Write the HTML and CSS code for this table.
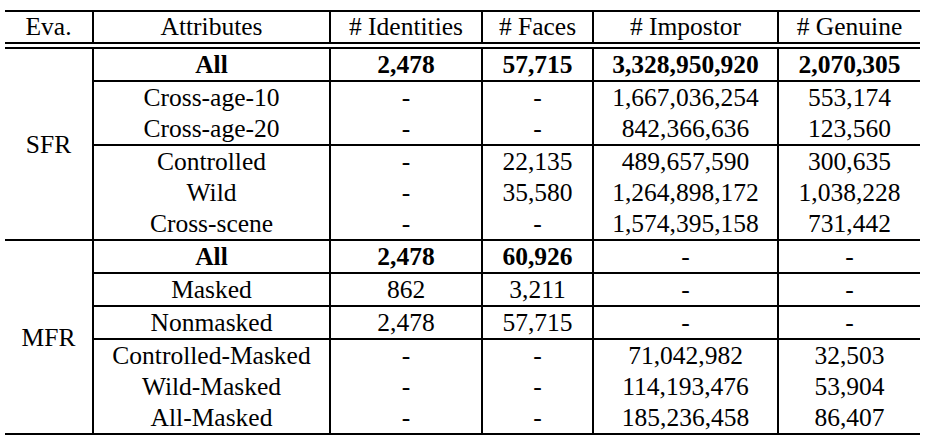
FILE: index.html
```html
<!DOCTYPE html>
<html>
<head>
<meta charset="utf-8">
<link rel="stylesheet" href="styles.css">
</head>
<body>
<table class="data">
  <colgroup>
    <col class="c-eva"><col class="c-attr"><col class="c-id"><col class="c-faces"><col class="c-imp"><col class="c-gen">
  </colgroup>
  <thead>
    <tr class="head">
      <th class="first">Eva.</th>
      <th>Attributes</th>
      <th># Identities</th>
      <th># Faces</th>
      <th># Impostor</th>
      <th># Genuine</th>
    </tr>
    <tr class="spacer"><td colspan="6"></td></tr>
  </thead>
  <tbody>
    <tr class="rule">
      <td class="first group" rowspan="6">SFR</td>
      <td class="b">All</td><td class="b">2,478</td><td class="b">57,715</td><td class="b">3,328,950,920</td><td class="b">2,070,305</td>
    </tr>
    <tr><td>Cross-age-10</td><td>-</td><td>-</td><td>1,667,036,254</td><td>553,174</td></tr>
    <tr class="rule"><td>Cross-age-20</td><td>-</td><td>-</td><td>842,366,636</td><td>123,560</td></tr>
    <tr><td>Controlled</td><td>-</td><td>22,135</td><td>489,657,590</td><td>300,635</td></tr>
    <tr><td>Wild</td><td>-</td><td>35,580</td><td>1,264,898,172</td><td>1,038,228</td></tr>
    <tr class="rule"><td>Cross-scene</td><td>-</td><td>-</td><td>1,574,395,158</td><td>731,442</td></tr>
    <tr class="rule">
      <td class="first group" rowspan="6">MFR</td>
      <td class="b">All</td><td class="b">2,478</td><td class="b">60,926</td><td>-</td><td>-</td>
    </tr>
    <tr class="rule"><td>Masked</td><td>862</td><td>3,211</td><td>-</td><td>-</td></tr>
    <tr class="rule"><td>Nonmasked</td><td>2,478</td><td>57,715</td><td>-</td><td>-</td></tr>
    <tr><td>Controlled-Masked</td><td>-</td><td>-</td><td>71,042,982</td><td>32,503</td></tr>
    <tr><td>Wild-Masked</td><td>-</td><td>-</td><td>114,193,476</td><td>53,904</td></tr>
    <tr class="rule"><td>All-Masked</td><td>-</td><td>-</td><td>185,236,458</td><td>86,407</td></tr>
  </tbody>
</table>
</body>
</html>
```
FILE: styles.css
```css
html, body {
  margin: 0;
  padding: 0;
  background: #ffffff;
}

body {
  padding: 10px 0 0 5px;
  font-family: "Liberation Serif", "Times New Roman", Times, "DejaVu Serif", serif;
}

.data {
  border-collapse: collapse;
  table-layout: fixed;
  width: 915px;
  font-family: inherit;
  font-size: 25.5px;
  color: #000;
}

.c-eva { width: 88px; }
.c-attr { width: 237px; }
.c-id { width: 152px; }
.c-faces { width: 111px; }
.c-imp { width: 185px; }
.c-gen { width: 142px; }

.data th,
.data td {
  font-family: inherit;
  padding: 0;
  height: 31px;
  line-height: 31px;
  text-align: center;
  white-space: nowrap;
  font-weight: normal;
  border-left: 2px solid #000;
}

.data .first {
  border-left: none;
}

.head th {
  height: 30px;
  line-height: 30px;
  border-top: 2px solid #000;
  border-bottom: 2px solid #000;
}

.spacer td {
  height: 3px;
  line-height: 3px;
  border-left: none;
  border-bottom: 2px solid #000;
}

.rule td {
  border-bottom: 2px solid #000;
}

.data .group {
  border-bottom: 2px solid #000;
  vertical-align: middle;
}

.data .b {
  font-weight: bold;
}
```
